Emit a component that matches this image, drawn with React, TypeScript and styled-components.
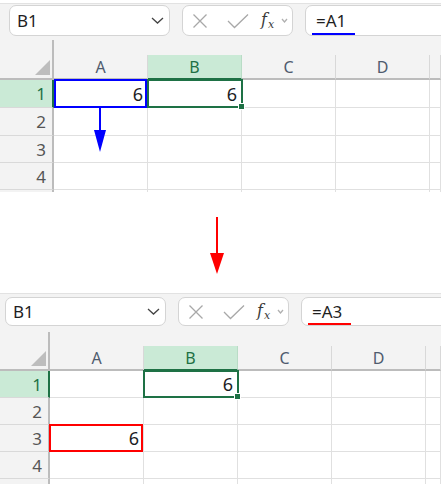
import React from 'react';
import styled, { createGlobalStyle } from 'styled-components';

const Global = createGlobalStyle`
  html, body { margin: 0; padding: 0; background: #ffffff; }
  body { font-family: "Noto Sans", "Liberation Sans", sans-serif; }
  #root { width: 441px; height: 484px; }
`;

const GREEN = '#1e7145';
const GREEN_BG = '#caead6';
const HEAD_BG = '#f3f3f3';

const Page = styled.div`
  width: 441px;
  height: 484px;
  overflow: hidden;
  display: flex;
  flex-direction: column;
  padding-top: 3px;
  box-sizing: border-box;
`;

const Panel = styled.section<{ $h: number }>`
  flex: none;
  height: ${p => p.$h}px;
  overflow: hidden;
`;

const PanelInner = styled.div<{ $shift: number }>`
  margin-left: ${p => -p.$shift}px;
  width: ${p => 441 + p.$shift}px;
  background: ${HEAD_BG};
  border-top: 1px solid #e2e2e2;
`;

const Toolbar = styled.div<{ $h: number; $pad: number }>`
  height: ${p => p.$h}px;
  box-sizing: border-box;
  padding: ${p => p.$pad}px 0 0 9px;
  display: flex;
  align-items: flex-start;
  gap: 12px;
`;

const BoxBase = styled.div<{ $h: number }>`
  height: ${p => p.$h}px;
  box-sizing: border-box;
  border: 1px solid #d4d4d4;
  border-radius: 7px;
  background: #ffffff;
  display: flex;
  align-items: center;
`;

const NameBox = styled(BoxBase)`
  width: 161px;
  flex: none;
  justify-content: space-between;
  padding: 0 5px 0 7px;
  font-size: 17px;
  color: #1f1f1f;
`;

const FnBox = styled(BoxBase)`
  width: 111px;
  flex: none;
  padding-left: 9px;
`;

const FormulaBox = styled(BoxBase)`
  flex: 1;
  margin-right: -12px;
  padding-left: 10px;
  position: relative;
  font-size: 17px;
  color: #1f1f1f;
`;

const Underline = styled.span<{ $color: string }>`
  position: absolute;
  left: 6px;
  bottom: 0px;
  width: 43px;
  height: 2px;
  background: ${p => p.$color};
`;

const IconSlot = styled.span<{ $ml: number }>`
  display: inline-flex;
  margin-left: ${p => p.$ml}px;
`;

const Fx = styled.span`
  margin-left: 12px;
  font-family: "DejaVu Serif", "Liberation Serif", serif;
  font-style: italic;
  font-size: 16px;
  color: #3a3a3a;
  line-height: 1;
  white-space: nowrap;
  sub {
    font-size: 11px;
    vertical-align: -3px;
    margin-left: 1px;
  }
`;

const Grid = styled.div<{ $rows: string }>`
  position: relative;
  display: grid;
  grid-template-columns: 54px repeat(4, 94px) 1fr;
  grid-template-rows: ${p => p.$rows};
  background: #ffffff;
`;

const Corner = styled.div`
  grid-row: 1 / span 2;
  grid-column: 1;
  background: ${HEAD_BG};
  border-right: 2px solid #bcbcbc;
  border-bottom: 2px solid #bcbcbc;
  position: relative;
  &::after {
    content: '';
    position: absolute;
    right: 2px;
    bottom: 3px;
    width: 15px;
    height: 15px;
    background: #bdbdbd;
    clip-path: polygon(100% 0, 100% 100%, 0 100%);
  }
`;

const Band = styled.div`
  grid-row: 1;
  grid-column: 2 / -1;
  background: ${HEAD_BG};
`;

const ColHead = styled.div<{ $sel?: boolean }>`
  background: ${p => (p.$sel ? GREEN_BG : HEAD_BG)};
  border-right: 1px solid ${p => (p.$sel ? '#b9dcc6' : '#d8d8d8')};
  border-bottom: 2px solid ${p => (p.$sel ? GREEN : '#bcbcbc')};
  color: ${p => (p.$sel ? GREEN : '#4f5b6e')};
  font-size: 16px;
  display: flex;
  align-items: center;
  justify-content: center;
`;

const RowHead = styled.div<{ $sel?: boolean }>`
  background: ${p => (p.$sel ? GREEN_BG : HEAD_BG)};
  border-right: 2px solid ${p => (p.$sel ? GREEN : '#bcbcbc')};
  border-bottom: 1px solid #d9d9d9;
  color: ${p => (p.$sel ? GREEN : '#555555')};
  font-size: 17px;
  display: flex;
  align-items: center;
  justify-content: flex-end;
  padding-right: 6px;
`;

type Sel = 'green' | 'blue' | 'red' | undefined;
const selColor = (s: Sel) => (s === 'green' ? GREEN : s === 'blue' ? '#0000ff' : '#ff0000');

const Cell = styled.div<{ $sel?: Sel }>`
  position: relative;
  border-right: 1px solid #e0e0e0;
  border-bottom: 1px solid #e0e0e0;
  font-size: 18px;
  color: #1c1c24;
  display: flex;
  align-items: center;
  justify-content: flex-end;
  padding-right: 4px;
  ${p =>
    p.$sel
      ? `
    &::after {
      content: '';
      position: absolute;
      left: ${p.$sel === 'blue' ? 0 : -1}px;
      top: -1px;
      right: ${p.$sel === 'green' ? -2 : 0}px;
      bottom: -1px;
      border: 2px solid ${selColor(p.$sel)};
      pointer-events: none;
    }`
      : ''}
  ${p =>
    p.$sel === 'green'
      ? `
    &::before {
      content: '';
      position: absolute;
      right: -4px;
      bottom: -3px;
      width: 5px;
      height: 5px;
      background: ${GREEN};
      border: 1px solid #ffffff;
      z-index: 2;
    }`
      : ''}
`;

const BlueArrow = styled.svg`
  position: absolute;
  left: 93px;
  top: 67px;
`;

const Gap = styled.div`
  flex: none;
  height: 101px;
  position: relative;
  background: #ffffff;
`;

const RedArrow = styled.svg`
  position: absolute;
  left: 209px;
  top: 25px;
`;

const Chevron = ({ w, h, color }: { w: number; h: number; color: string }) => (
  <svg width={w} height={h} viewBox={`0 0 ${w} ${h}`}>
    <polyline points={`1,1 ${w / 2},${h - 1} ${w - 1},1`} fill="none" stroke={color} strokeWidth="1.3" />
  </svg>
);

type PanelProps = {
  shift: number;
  height: number;
  toolbarH: number;
  pad: number;
  boxH: number;
  rows: string;
  formula: string;
  lineColor: string;
  a1?: Sel;
  a3?: Sel;
  aValueRow: number;
  arrow?: boolean;
};

const cols = ['A', 'B', 'C', 'D', ''];

const Sheet = (p: PanelProps) => {
  const rowsData = [1, 2, 3, 4, 0];
  return (
    <Panel $h={p.height}>
      <PanelInner $shift={p.shift}>
        <Toolbar $h={p.toolbarH} $pad={p.pad}>
          <NameBox $h={p.boxH}>
            <span>B1</span>
            <Chevron w={13} h={7} color="#444" />
          </NameBox>
          <FnBox $h={p.boxH}>
            <IconSlot $ml={0}>
              <svg width="16" height="16" viewBox="0 0 16 16">
                <path d="M1.5 1.5 L14.5 14.5 M14.5 1.5 L1.5 14.5" stroke="#a8a8a8" strokeWidth="1.3" fill="none" />
              </svg>
            </IconSlot>
            <IconSlot $ml={19}>
              <svg width="22" height="16" viewBox="0 0 22 16">
                <polyline points="1,8 7.5,14.5 21,1.5" stroke="#a8a8a8" strokeWidth="1.3" fill="none" />
              </svg>
            </IconSlot>
            <Fx>
              f<sub>x</sub>
            </Fx>
            <IconSlot $ml={7}>
              <Chevron w={7} h={5} color="#b0b0b0" />
            </IconSlot>
          </FnBox>
          <FormulaBox $h={p.boxH}>
            <span>{p.formula}</span>
            <Underline $color={p.lineColor} />
          </FormulaBox>
        </Toolbar>
        <Grid $rows={p.rows}>
          <Corner />
          <Band />
          {cols.map((c, i) => (
            <ColHead key={'h' + i} $sel={c === 'B'}>
              {c}
            </ColHead>
          ))}
          {rowsData.map(r => (
            <React.Fragment key={'r' + r}>
              <RowHead $sel={r === 1}>{r > 0 ? r : ''}</RowHead>
              {cols.map((c, i) => {
                let sel: Sel;
                let val = '';
                if (r === 1 && c === 'B') {
                  sel = 'green';
                  val = '6';
                }
                if (c === 'A' && r === p.aValueRow) {
                  sel = r === 1 ? p.a1 : p.a3;
                  val = '6';
                }
                return (
                  <Cell key={c + i + r} $sel={sel}>
                    {val}
                  </Cell>
                );
              })}
            </React.Fragment>
          ))}
          {p.arrow && (
            <BlueArrow width="14" height="46" viewBox="0 0 14 46">
              <line x1="7" y1="0" x2="7" y2="25" stroke="#0000ff" strokeWidth="2" />
              <polygon points="1,23 13,23 7,45" fill="#0000ff" />
            </BlueArrow>
          )}
        </Grid>
      </PanelInner>
    </Panel>
  );
};

export default function App() {
  return (
    <>
      <Global />
      <Page>
        <Sheet
          shift={0}
          height={189}
          toolbarH={36}
          pad={1}
          boxH={31}
          rows="15px 25px 28px 28px 27px 27px 20px"
          formula="=A1"
          lineColor="#0000ff"
          a1="blue"
          aValueRow={1}
          arrow
        />
        <Gap>
          <RedArrow width="16" height="58" viewBox="0 0 16 58">
            <line x1="8" y1="0" x2="8" y2="38" stroke="#ff0000" strokeWidth="2" />
            <polygon points="1,36 15,36 8,57" fill="#ff0000" />
          </RedArrow>
        </Gap>
        <Sheet
          shift={4}
          height={191}
          toolbarH={38}
          pad={3}
          boxH={29}
          rows="14px 25px 27px 27px 27px 27px 20px"
          formula="=A3"
          lineColor="#ff0000"
          a3="red"
          aValueRow={3}
        />
      </Page>
    </>
  );
}
